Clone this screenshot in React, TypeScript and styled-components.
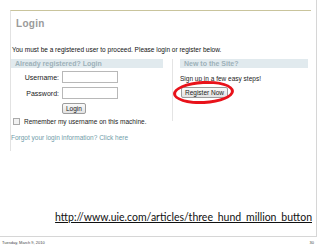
import React from 'react';
import styled, { createGlobalStyle } from 'styled-components';

const GlobalStyle = createGlobalStyle`
  html, body {
    margin: 0;
    padding: 0;
    background: #ffffff;
  }
`;

const Page = styled.div`
  width: 320px;
  height: 246px;
  overflow: hidden;
  font-family: 'Liberation Sans', Arial, sans-serif;
  font-size: 7px;
`;

const Slide = styled.div`
  width: 316px;
  height: 236px;
  border-right: 1px solid #d6d6d6;
  border-bottom: 1px solid #d6d6d6;
  display: flex;
  flex-direction: column;
`;

const Shot = styled.div`
  margin: 10px 0 0 10px;
  width: 300px;
  border-top: 1px solid #c9c49c;
  border-left: 1px solid #e2e2e2;
  height: 140px;
`;

const Title = styled.h1`
  margin: 0;
  padding: 7px 0 0 5px;
  height: 35px;
  box-sizing: border-box;
  font-size: 10px;
  font-weight: bold;
  color: #9a9a9a;
  letter-spacing: 0.3px;
`;

const Intro = styled.p`
  margin: 0;
  padding-left: 1px;
  font-size: 6.5px;
  color: #111;
`;

const Columns = styled.div`
  display: grid;
  grid-template-columns: 152px 1fr;
  margin-top: 6px;
`;

const Panel = styled.div<{ $divider?: boolean }>`
  padding-left: ${p => (p.$divider ? '7px' : '0')};
  border-left: ${p => (p.$divider ? '1px solid #e4e4e4' : 'none')};
  margin-left: ${p => (p.$divider ? '9px' : '0')};
  height: ${p => (p.$divider ? '62px' : 'auto')};
  padding-right: ${p => (p.$divider ? '3px' : '0')};
`;

const PanelHead = styled.div`
  background: #e1eaee;
  height: 9px;
  line-height: 9px;
  padding-left: 4px;
  font-size: 7px;
  font-weight: bold;
  color: #9db1b9;
`;

const Form = styled.div`
  display: grid;
  grid-template-columns: 47px 56px;
  column-gap: 3px;
  row-gap: 4px;
  align-items: center;
  margin: 3px 0 0 1px;
`;

const Label = styled.label`
  font-size: 7px;
  color: #222;
  text-align: right;
`;

const Input = styled.div`
  height: 12px;
  border: 1px solid #b8b8b8;
  box-sizing: border-box;
  background: #fff;
`;

const Button = styled.div`
  display: block;
  height: 11px;
  line-height: 9px;
  padding: 0 3px;
  box-sizing: border-box;
  border: 1px solid #9c9c9c;
  border-radius: 2px;
  background: linear-gradient(#fafafa, #e2e2e2);
  font-size: 6.5px;
  color: #222;
`;

const ButtonCell = styled.div`
  grid-column: 2;
  display: flex;
`;

const CheckRow = styled.div`
  display: flex;
  align-items: center;
  gap: 4px;
  margin: 4px 0 0 2px;
  font-size: 6.5px;
  color: #222;
`;

const Check = styled.span`
  width: 5px;
  height: 5px;
  border: 1px solid #aaa;
  background: #f2f2f2;
`;

const Forgot = styled.div`
  margin-top: 9px;
  font-size: 6.5px;
  color: #6f9ca9;
`;

const SignUp = styled.div`
  margin-top: 7px;
  font-size: 6.5px;
  color: #222;
`;

const RegisterWrap = styled.div`
  position: relative;
  margin: 5px 0 0 1px;
  display: flex;
  width: fit-content;
`;

const Ring = styled.div`
  position: absolute;
  left: -8px;
  top: -6px;
  width: 61px;
  height: 23px;
  border: 3.5px solid #e8121a;
  border-radius: 50%;
  box-sizing: border-box;
  transform: rotate(-3deg);
`;

const UrlRow = styled.div`
  margin-top: auto;
  margin-bottom: 13px;
  padding-right: 4px;
  text-align: right;
`;

const Url = styled.span`
  font-family: 'Lato', 'Open Sans', sans-serif;
  font-size: 10.5px;
  color: #111;
  text-decoration: underline;
  text-underline-offset: 1px;
`;

const Footer = styled.div`
  display: flex;
  justify-content: space-between;
  padding: 3px 6px 0 2px;
  font-size: 4px;
  color: #444;
`;

export default function App() {
  return (
    <Page>
      <GlobalStyle />
      <Slide>
        <Shot>
          <Title>Login</Title>
          <Intro>You must be a registered user to proceed. Please login or register below.</Intro>
          <Columns>
            <Panel>
              <PanelHead>Already registered? Login</PanelHead>
              <Form>
                <Label>Username:</Label>
                <Input />
                <Label>Password:</Label>
                <Input />
                <ButtonCell>
                  <Button>Login</Button>
                </ButtonCell>
              </Form>
              <CheckRow>
                <Check />
                Remember my username on this machine.
              </CheckRow>
              <Forgot>Forgot your login information? Click here</Forgot>
            </Panel>
            <Panel $divider>
              <PanelHead>New to the Site?</PanelHead>
              <SignUp>Sign up in a few easy steps!</SignUp>
              <RegisterWrap>
                <Button>Register Now</Button>
                <Ring />
              </RegisterWrap>
            </Panel>
          </Columns>
        </Shot>
        <UrlRow>
          <Url>http://www.uie.com/articles/three_hund_million_button</Url>
        </UrlRow>
      </Slide>
      <Footer>
        <span>Tuesday, March 9, 2010</span>
        <span>30</span>
      </Footer>
    </Page>
  );
}
